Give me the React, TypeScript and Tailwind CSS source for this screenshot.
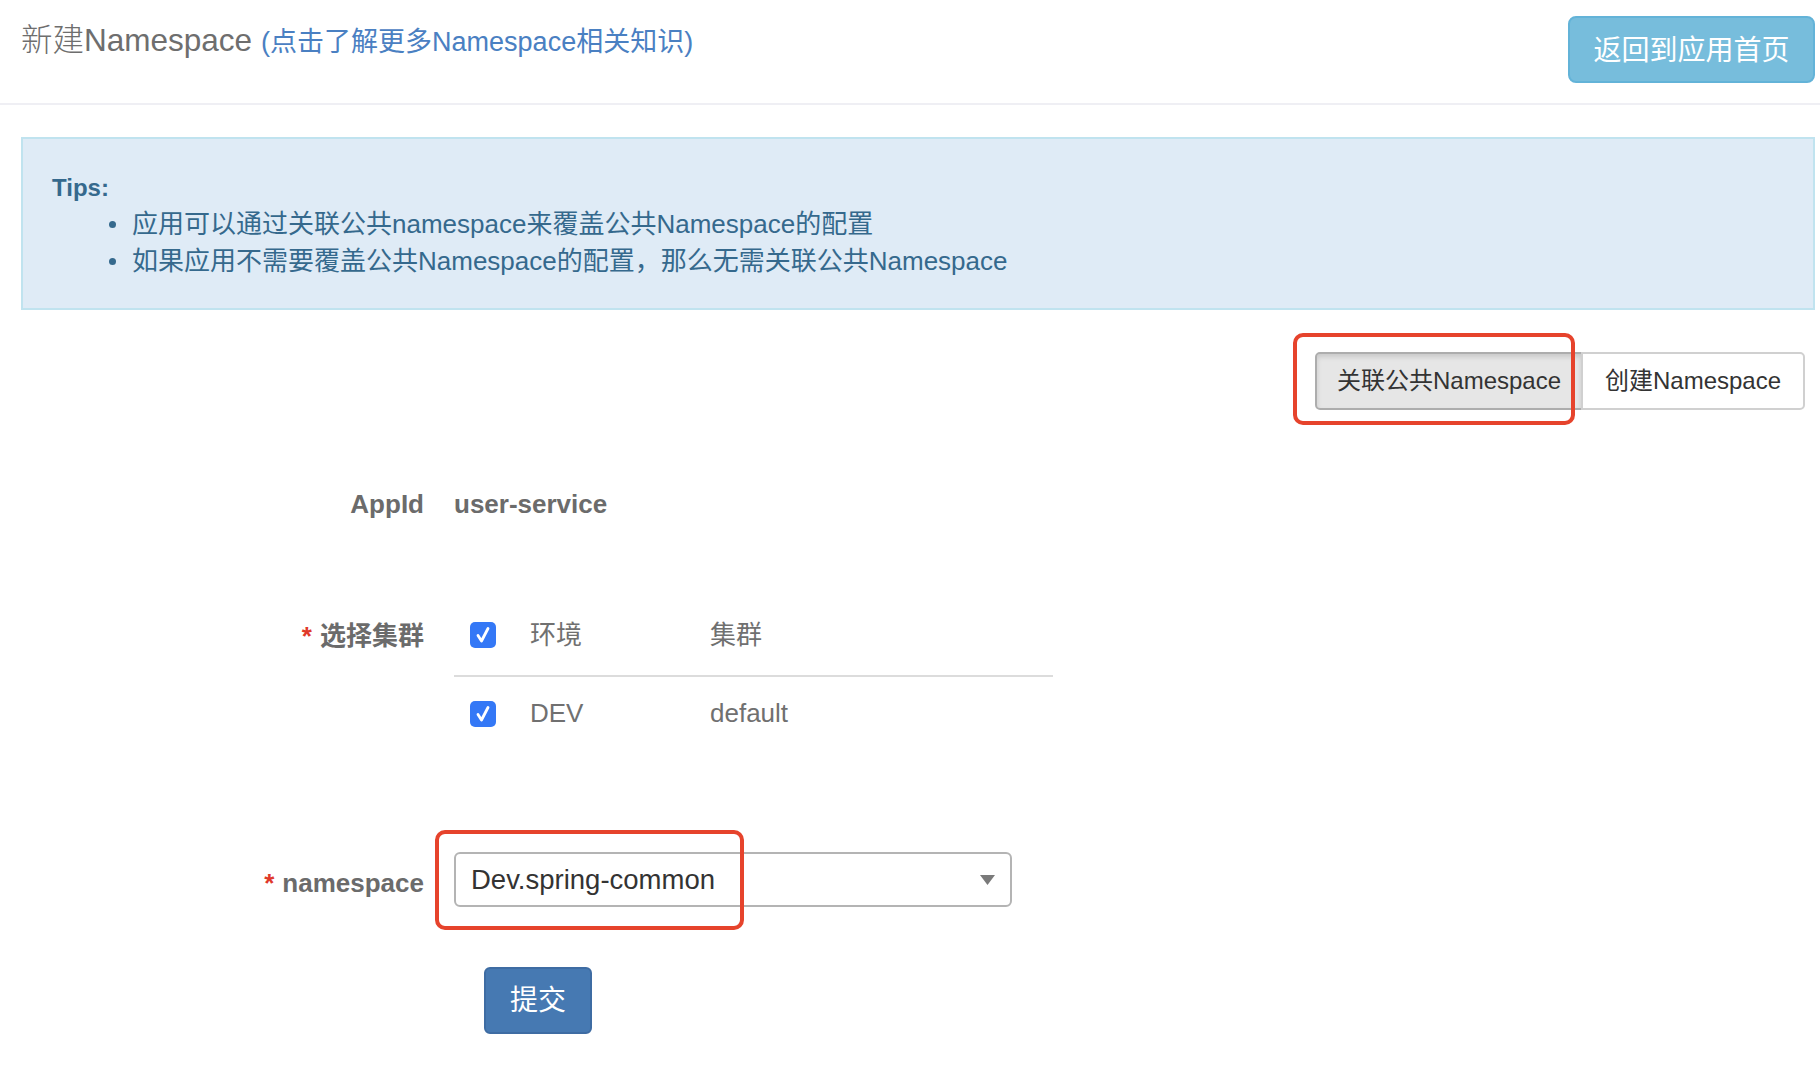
import React from "react";

const FONT = { fontFamily: '"Liberation Sans", "Noto Sans CJK SC", sans-serif' };

function Check() {
  return (
    <span className="flex h-[26px] w-[26px] items-center justify-center rounded-[5px] bg-[#3478f6]">
      <svg width="18" height="20" viewBox="0 0 18 20" fill="none">
        <path d="M4 10.5 L7.5 16 L14 3.5" stroke="#fff" strokeWidth="2.8" strokeLinecap="round" strokeLinejoin="round" />
      </svg>
    </span>
  );
}

export default function App() {
  return (
    <div className="min-h-[1066px] w-[1820px] bg-white" style={FONT}>
      {/* header */}
      <div className="flex h-[105px] items-start justify-between border-b-2 border-[#efeff4] pl-[21px] pr-[5px]">
        <div className="pt-[21px] leading-[38px]">
          <span className="text-[31.5px] font-light text-[#6e6e6e]">新建Namespace</span>
          <span className="ml-[9px] text-[27px] text-[#4a80c2]">(点击了解更多Namespace相关知识)</span>
        </div>
        <button className="mt-[16px] flex h-[67px] w-[247px] items-center justify-center rounded-[8px] border-2 border-[#63b3d8] bg-[#77bddc] pt-[2px] text-[28px] text-white">
          返回到应用首页
        </button>
      </div>

      {/* tips */}
      <div className="ml-[21px] mr-[5px] mt-[32px] h-[173px] border-2 border-[#c0e3ef] bg-[#dfebf6] pl-[29px] pt-[30px] text-[26px] leading-[37px] text-[#35698d]">
        <div className="text-[24px] font-bold">Tips:</div>
        <ul>
          <li className="flex items-center">
            <span className="ml-[57px] mr-[16px] h-[7px] w-[7px] rounded-full bg-[#35698d]" />
            应用可以通过关联公共namespace来覆盖公共Namespace的配置
          </li>
          <li className="flex items-center">
            <span className="ml-[57px] mr-[16px] h-[7px] w-[7px] rounded-full bg-[#35698d]" />
            如果应用不需要覆盖公共Namespace的配置，那么无需关联公共Namespace
          </li>
        </ul>
      </div>

      {/* tab buttons */}
      <div className="mr-[15px] mt-[42px] flex justify-end">
        <div className="relative flex">
          <button className="h-[58px] w-[268px] rounded-l-[5px] border-2 border-[#adadad] bg-[#e6e6e6] text-[24px] text-[#333] shadow-[inset_0_3px_5px_rgba(0,0,0,0.125)]">
            关联公共Namespace
          </button>
          <button className="-ml-[2px] h-[58px] w-[224px] rounded-r-[5px] border-2 border-[#d0d0d0] bg-white text-[24px] text-[#333]">
            创建Namespace
          </button>
          <div className="absolute left-[-22px] top-[-19px] h-[92px] w-[282px] rounded-[10px] border-[4px] border-[#e6432c]" />
        </div>
      </div>

      {/* form */}
      <div className="mt-[76px] grid grid-cols-[403px_1fr] gap-x-[30px] pl-[21px] text-[26px]">
        {/* AppId */}
        <div className="flex h-[36px] items-center justify-end font-bold text-[#6b6b6b]">AppId</div>
        <div className="flex h-[36px] items-center font-bold text-[#6b6b6b]">user-service</div>

        {/* clusters */}
        <div className="mt-[73px] flex h-[82px] items-center justify-end font-bold text-[#6b6b6b]">
          <span className="mr-[8px] text-[#e0392a]">*</span>选择集群
        </div>
        <div className="mt-[73px] w-[599px] text-[#707070]">
          <div className="flex h-[82px] items-center border-b-2 border-[#dcdcdc] pl-[16px]">
            <Check />
            <span className="ml-[34px] w-[180px]">环境</span>
            <span>集群</span>
          </div>
          <div className="flex h-[73px] items-center pl-[16px]">
            <Check />
            <span className="ml-[34px] w-[180px]">DEV</span>
            <span>default</span>
          </div>
        </div>

        {/* namespace */}
        <div className="mt-[102px] flex h-[55px] items-center justify-end pt-[8px] font-bold text-[#6b6b6b]">
          <span className="mr-[8px] text-[#e0392a]">*</span>namespace
        </div>
        <div className="mt-[102px]">
          <div className="relative flex h-[55px] w-[558px] items-center justify-between rounded-[6px] border-2 border-[#b4b4b4] bg-white pl-[15px] pr-[15px] text-[27.5px] text-[#333]">
            <span>Dev.spring-common</span>
            <svg width="15" height="10" viewBox="0 0 15 10">
              <path d="M0 0 H15 L7.5 10 Z" fill="#7a7a7a" />
            </svg>
            <div className="absolute left-[-21px] top-[-24px] h-[100px] w-[309px] rounded-[10px] border-[4px] border-[#e6432c]" />
          </div>
        </div>

        {/* submit */}
        <div />
        <div className="mt-[60px] pl-[30px]">
          <button className="flex h-[67px] w-[108px] items-center justify-center rounded-[6px] border-2 border-[#3e6ca3] bg-[#4679b2] text-[28px] text-white">
            提交
          </button>
        </div>
      </div>
    </div>
  );
}
